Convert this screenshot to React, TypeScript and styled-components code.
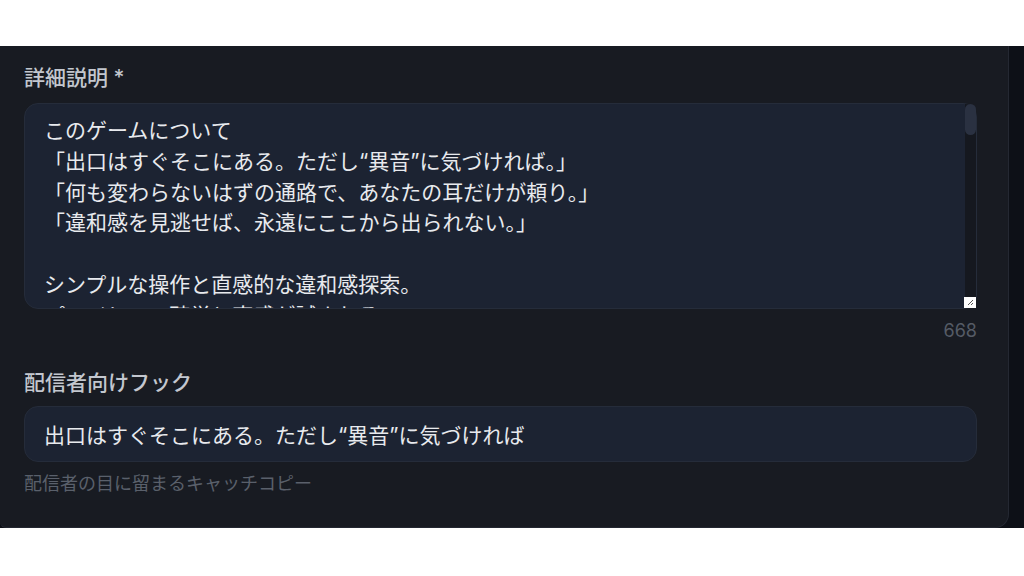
import React from "react";
import styled, { createGlobalStyle } from "styled-components";

const GlobalStyle = createGlobalStyle`
  html, body {
    margin: 0;
    padding: 0;
    background: #ffffff;
  }
  body {
    font-family: "Inter", "Noto Sans CJK JP", sans-serif;
  }
  * { box-sizing: border-box; }
`;

const Frame = styled.div`
  margin-top: 46px;
  height: 482px;
  background: #0d1017;
  display: flex;
  overflow: hidden;
`;

const Panel = styled.section`
  width: 1009px;
  height: 100%;
  background: #181b22;
  border-right: 1px solid #242832;
  border-bottom: 1px solid #242832;
  border-radius: 0 0 14px 6px;
  padding: 17px 31px 0 24px;
  display: flex;
  flex-direction: column;
`;

const Label = styled.label<{ $gap?: number; $after?: number }>`
  display: block;
  margin-top: ${(p) => p.$gap ?? 0}px;
  margin-bottom: ${(p) => p.$after ?? 10}px;
  font-family: "Inter", "Noto Sans CJK JP", sans-serif;
  font-size: 21px;
  line-height: 30px;
  font-weight: 500;
  color: #c3c7cf;
`;

const TextAreaWrap = styled.div`
  position: relative;
  height: 206px;
`;

const TextArea = styled.textarea`
  display: block;
  width: 100%;
  height: 100%;
  margin: 0;
  padding: 12px 24px 12px 19px;
  background: #1c2332;
  border: 1px solid #252c3a;
  border-radius: 14px;
  color: #e8eaee;
  font-family: "Inter", "Noto Sans CJK JP", sans-serif;
  font-size: 21px;
  line-height: 30.75px;
  resize: none;
  outline: none;
  overflow: hidden;
`;

const ScrollTrack = styled.div`
  position: absolute;
  top: 1px;
  right: 1px;
  bottom: 12px;
  width: 11px;
  background: #15181f;
  border-top-right-radius: 12px;
`;

const ScrollThumb = styled.div`
  position: absolute;
  top: 0;
  left: 0;
  width: 11px;
  height: 31px;
  border-radius: 6px;
  background: #2a3141;
`;

const Resizer = styled.div`
  position: absolute;
  right: 1px;
  bottom: 1px;
  width: 12px;
  height: 11px;
  background: #ffffff;
  display: flex;
  align-items: center;
  justify-content: center;
`;

const Counter = styled.div`
  margin-top: 8px;
  text-align: right;
  font-size: 18px;
  line-height: 27px;
  color: #555b66;
`;

const Input = styled.input`
  display: block;
  width: 100%;
  height: 56px;
  margin: 0;
  padding: 0 19px;
  background: #1c2332;
  border: 1px solid #252c3a;
  border-radius: 14px;
  color: #e8eaee;
  font-family: "Inter", "Noto Sans CJK JP", sans-serif;
  font-size: 21px;
  outline: none;
`;

const Helper = styled.div`
  margin-top: 8px;
  font-size: 18px;
  line-height: 27px;
  color: #5a606b;
`;

const description = `このゲームについて
「出口はすぐそこにある。ただし“異音”に気づければ。」
「何も変わらないはずの通路で、あなたの耳だけが頼り。」
「違和感を見逃せば、永遠にここから出られない。」

シンプルな操作と直感的な違和感探索。
プレイヤーの聴覚と直感が試される。

■ ゲームの流れ
1. 地下通路を進む
2. 周囲の音に耳を澄ませる
3. 異音があれば引き返す
4. 異音がなければそのまま進む
5. 正しい判断を8回続ければ脱出

■ 特徴
・足音、換気扇、蛍光灯のノイズなど、細部までこだわった環境音
・ヘッドホン推奨の立体音響
・1プレイ約15〜30分の遊びやすいボリューム
・ランダムに発生する30種類以上の異音

あなたは、この通路から出られるだろうか。`;

export default function App() {
  return (
    <>
      <GlobalStyle />
      <Frame>
        <Panel>
          <Label htmlFor="desc">詳細説明 *</Label>
          <TextAreaWrap>
            <TextArea id="desc" defaultValue={description} spellCheck={false} />
            <ScrollTrack>
              <ScrollThumb />
            </ScrollTrack>
            <Resizer>
              <svg width="7" height="7" viewBox="0 0 7 7">
                <path d="M6 1 L1 6 M6 4 L4 6" stroke="#555" strokeWidth="1" />
              </svg>
            </Resizer>
          </TextAreaWrap>
          <Counter>668</Counter>
          <Label htmlFor="hook" $gap={24} $after={8}>
            配信者向けフック
          </Label>
          <Input
            id="hook"
            defaultValue="出口はすぐそこにある。ただし“異音”に気づければ"
            spellCheck={false}
          />
          <Helper>配信者の目に留まるキャッチコピー</Helper>
        </Panel>
      </Frame>
    </>
  );
}
